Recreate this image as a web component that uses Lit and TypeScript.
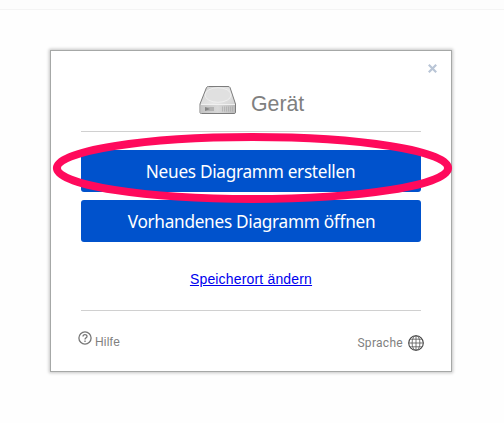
import { LitElement, html, css } from "lit";
import { customElement } from "lit/decorators.js";

@customElement("app-root")
export class AppRoot extends LitElement {
  static styles = css`
    :host {
      display: block;
      box-sizing: border-box;
      height: 423px;
      background: #fefefe;
      font-family: "Liberation Sans", Arial, sans-serif;
    }
    .bar {
      height: 9px;
      background: #fdfdfd;
      border-bottom: 1px solid #f4f4f4;
      margin-bottom: 40px;
    }
    .dialog {
      position: relative;
      box-sizing: border-box;
      width: 402px;
      height: 322px;
      margin-left: 50px;
      padding: 0 30px;
      background: #fff;
      border: 1px solid #a6a8a7;
      box-shadow: 0 0 3px 1px #c4c4c4;
      display: flex;
      flex-direction: column;
    }
    .close {
      position: absolute;
      right: 14px;
      top: 13px;
      width: 9px;
      height: 9px;
    }
    .head {
      height: 81px;
      box-sizing: border-box;
      padding: 34px 0 0 118px;
      display: flex;
      align-items: flex-start;
      gap: 14px;
      border-bottom: 1px solid #d0d0d0;
      color: #808080;
      font-size: 21.3px;
      line-height: 38px;
    }
    .head + .btn {
      margin-top: 18px;
    }
    .btn + .btn {
      margin-top: 8px;
    }
    .btn {
      height: 42px;
      flex: none;
      padding: 0;
      border: 0;
      border-radius: 3px;
      background: #0052cc;
      color: #fff;
      font: 18px/42px "Noto Sans", sans-serif;
      letter-spacing: -0.3px;
      text-align: center;
    }
    .btn span {
      display: inline-block;
      transform: scaleX(0.956);
    }
    .link {
      align-self: center;
      margin-top: 28px;
      font-size: 14px;
      line-height: 18px;
      letter-spacing: 0.17px;
      color: #0000ee;
      text-decoration: underline;
    }
    .foot {
      margin: 20px -3px 0;
      display: flex;
      justify-content: space-between;
      font-size: 12px;
      line-height: 14px;
      color: #808080;
    }
    .rule {
      margin-top: 22px;
      height: 1px;
      background: #d0d0d0;
    }
    .item {
      display: flex;
    }
    .help { gap: 3px; letter-spacing: 0.2px; }
    .help span { margin-top: 4px; }
    .lang { gap: 5px; font-family: Roboto, sans-serif; letter-spacing: 0.3px; }
    .lang span { margin-top: 5px; }
    .lang svg { margin-top: 4px; }
    svg { display: block; flex: none; }
    .mark {
      position: absolute;
      left: 0;
      top: 80px;
      overflow: visible;
      pointer-events: none;
    }
  `;

  render() {
    return html`
      <div class="bar"></div>
      <div class="dialog">
        <svg class="close" viewBox="0 0 9 9">
          <path d="M.8.8L8.200 8.200M8.200.8L.8 8.200" stroke="#b9c5d6" stroke-width="2.200" />
        </svg>
        <div class="head">
          <svg width="38" height="30" viewBox="0 0 38 30">
            <defs>
              <linearGradient id="top" x1="0" y1="0" x2="1" y2="1">
                <stop offset="0" stop-color="#cfcfcf" />
                <stop offset=".5" stop-color="#e6e6e6" />
                <stop offset="1" stop-color="#c8c8c8" />
              </linearGradient>
              <linearGradient id="front" x1="0" y1="0" x2="1" y2="0">
                <stop offset="0" stop-color="#c4c4c4" />
                <stop offset=".5" stop-color="#d8d8d8" />
                <stop offset="1" stop-color="#bcbcbc" />
              </linearGradient>
            </defs>
            <path d="M1 27.500V19L7.500 2.500Q8 1.500 9.500 1.500H29Q30.500 1.500 31 2.500L36.500 19V27Q36.500 28.500 35 28.500H2.500Q1 28.500 1 27.500Z" fill="url(#top)" stroke="#7c7c7c" stroke-width="1" />
            <ellipse cx="19" cy="10" rx="13" ry="7.300" fill="#e0e0e0" stroke="#efefef" stroke-width="1" />
            <path d="M1.500 19.500H36V27Q36 28 35 28H2.500Q1.500 28 1.500 27Z" fill="url(#front)" />
            <path d="M2 19.500H36" stroke="#f0f0f0" />
            <path d="M6 22H15V26H6Z" fill="#b2b2b2" />
            <path d="M6 22L11 24L6 26Z" fill="#858585" />
            <path d="M23.500 21.500V26.500M25.500 21.500V26.500M27.500 21.500V26.500M29.500 21.500V26.500M31.500 21.500V26.500M33.500 21.500V26.500" stroke="#aaa" stroke-width=".7" />
          </svg>
          <span>Gerät</span>
        </div>
        <button class="btn"><span>Neues Diagramm erstellen</span></button>
        <button class="btn"><span>Vorhandenes Diagramm öffnen</span></button>
        <a class="link">Speicherort ändern</a>
        <div class="rule"></div>
        <div class="foot">
          <div class="item help">
            <svg width="14" height="14" viewBox="0 0 14 14" fill="none" stroke="#777">
              <circle cx="7" cy="7" r="6.100" stroke-width="1.300" />
              <path d="M5 5.500C5 2.900 9 2.900 9 5.400C9 6.800 7 6.900 7 8.600M7 9.500V10.900" stroke-width="1.300" />
            </svg>
            <span>Hilfe</span>
          </div>
          <div class="item lang">
            <span>Sprache</span>
            <svg width="16" height="16" viewBox="0 0 16 16" fill="none" stroke="#555" stroke-width=".8">
              <circle cx="8" cy="8" r="7.300" stroke="#444" stroke-width="1.100" />
              <ellipse cx="8" cy="8" rx="3.900" ry="7.300" />
              <path d="M8 .7V15.300M.7 8H15.300M2 4.200H14M2 11.800H14" />
            </svg>
          </div>
        </div>
        <svg class="mark" width="402" height="74" viewBox="51 131 402 74">
          <ellipse cx="252.500" cy="168" rx="195.600" ry="31" fill="none" stroke="#ff0a5c" stroke-width="8" />
        </svg>
      </div>
    `;
  }
}
